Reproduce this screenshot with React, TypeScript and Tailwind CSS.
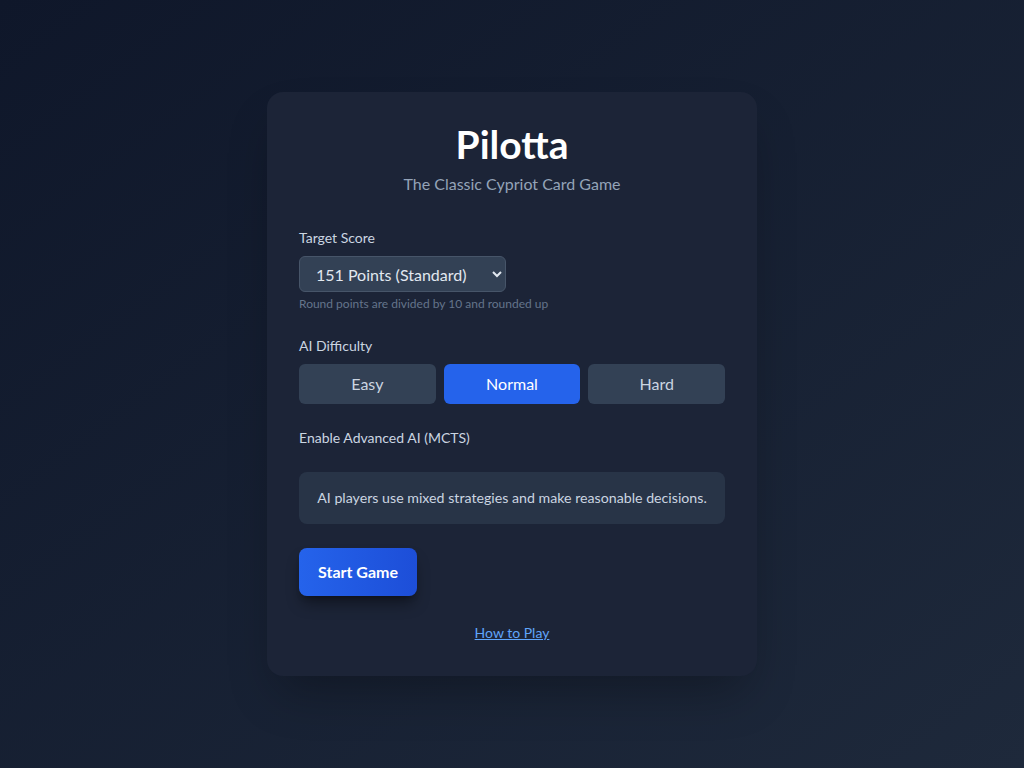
import React, { useState } from 'react';

type Difficulty = 'easy' | 'normal' | 'hard';

const difficulties: { id: Difficulty; label: string }[] = [
  { id: 'easy', label: 'Easy' },
  { id: 'normal', label: 'Normal' },
  { id: 'hard', label: 'Hard' },
];

const App: React.FC = () => {
  const [difficulty, setDifficulty] = useState<Difficulty>('normal');
  const [target, setTarget] = useState('151');

  return (
    <div
      className="min-h-screen w-full bg-gradient-to-br from-[#0f172a] to-[#1e293b] flex items-start justify-center pt-[92px]"
      style={{ fontFamily: 'Lato, "Noto Sans", sans-serif' }}
    >
      <div className="w-[490px] rounded-2xl bg-[#1c2437] px-8 pt-8 pb-8 shadow-2xl shadow-black/30">
        <h1 className="text-center text-[39px] font-bold leading-10 text-white">Pilotta</h1>
        <p className="mt-2 text-center text-base leading-6 text-[#94a3b8]">The Classic Cypriot Card Game</p>

        <div className="mt-8">
          <label className="block text-sm leading-5 text-[#cbd5e1]">Target Score</label>
          <select
            value={target}
            onChange={(e) => setTarget(e.target.value)}
            className="mt-2 h-9 w-[207px] rounded-md border border-[#475569] bg-[#334155] pl-3 pr-2 text-base text-[#e2e8f0]"
          >
            <option value="101">101 Points (Short)</option>
            <option value="151">151 Points (Standard)</option>
            <option value="201">201 Points (Long)</option>
          </select>
          <p className="mt-1 text-xs leading-4 text-[#64748b]">Round points are divided by 10 and rounded up</p>
        </div>

        <div className="mt-6">
          <label className="block text-sm leading-5 text-[#cbd5e1]">AI Difficulty</label>
          <div className="mt-2 grid grid-cols-3 gap-2">
            {difficulties.map((d) => (
              <button
                key={d.id}
                onClick={() => setDifficulty(d.id)}
                className={`h-10 rounded-md text-base ${
                  difficulty === d.id ? 'bg-[#2563eb] text-white' : 'bg-[#334155] text-[#cbd5e1]'
                }`}
              >
                {d.label}
              </button>
            ))}
          </div>
        </div>

        <div className="mt-6">
          <label className="block text-sm leading-5 text-[#cbd5e1]">Enable Advanced AI (MCTS)</label>
        </div>

        <div className="mt-6 rounded-lg bg-[#283447] px-4 py-4 text-[14.2px] leading-5 text-[#cbd5e1] text-center whitespace-nowrap">
          AI players use mixed strategies and make reasonable decisions.
        </div>

        <button className="mt-6 h-12 rounded-lg bg-gradient-to-r from-[#2563eb] to-[#1d4ed8] px-[19px] text-base font-bold text-white shadow-lg shadow-black/40">
          Start Game
        </button>

        <div className="mt-6 text-center">
          <a href="#" className="text-sm leading-5 text-[#60a5fa] underline">How to Play</a>
        </div>
      </div>
    </div>
  );
};

export default App;
